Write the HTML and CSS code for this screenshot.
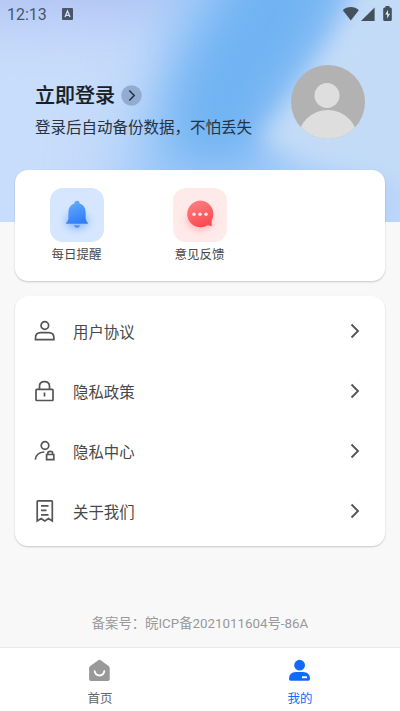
FILE: index.html
```html
<!DOCTYPE html>
<html lang="zh-CN">
<head>
<meta charset="utf-8">
<meta name="viewport" content="width=device-width, initial-scale=1">
<title>我的</title>
<link rel="stylesheet" href="styles.css">
</head>
<body>
<div class="screen">
  <header class="hero">
    <svg class="hero-bg" viewBox="0 0 400 222" preserveAspectRatio="none" aria-hidden="true">
      <defs>
        <filter id="soft" filterUnits="userSpaceOnUse" x="-150" y="-150" width="700" height="520" color-interpolation-filters="sRGB"><feGaussianBlur stdDeviation="32"/></filter>
        <filter id="edge" filterUnits="userSpaceOnUse" x="-150" y="-150" width="700" height="520" color-interpolation-filters="sRGB"><feGaussianBlur stdDeviation="24"/></filter>
        <filter id="rim" filterUnits="userSpaceOnUse" x="-150" y="-150" width="700" height="520" color-interpolation-filters="sRGB"><feGaussianBlur stdDeviation="11"/></filter>
      </defs>
      <rect width="400" height="222" fill="#c8dcfb"/>
      <ellipse cx="60" cy="-30" rx="190" ry="45" fill="#a9bcf3" opacity=".9" filter="url(#soft)"/>
      <path d="M185-60H370L310 70 262 115 290 160 400 185 370 260H170L110 175 155 90Z" fill="#9dc9f8" filter="url(#soft)"/>
      <path d="M245-50H365L325 40 280 105 250 165 165 160 175 75Z" fill="#6bb0f2" opacity=".88" filter="url(#edge)"/>
      <path d="M378-40H450V185L330 165 260 141 303 88 342 30Z" fill="#c3dbf7" filter="url(#rim)"/>
    </svg>
    <div class="status">
      <span class="clock">12:13</span>
      <svg class="badge" width="11" height="12" viewBox="0 0 11 12"><rect width="11" height="12" rx="1" fill="#48566b"/><path d="M3 9 5.500 3 8 9M4 7.300H7" fill="none" stroke="#d5e1f7" stroke-width="1.300"/></svg>
      <svg class="signals" width="52" height="16" viewBox="0 0 52 16" fill="#43515f">
        <path d="M.8 4.200C5-.2 12.600-.2 16.800 4.200L8.800 14.600Z"/>
        <path d="M19 15 32.600 1.500V15Z"/>
        <path d="M43.500 1.500V0H47.500V1.500H48.500Q49.800 1.500 49.800 3V13.500Q49.800 15 48.500 15H42.500Q41.200 15 41.200 13.500V3Q41.200 1.500 42.500 1.500Z"/>
        <path d="M46 3.800 43.200 8.500H45.200V12.700L48 7.700H46Z" fill="#dbe7f5"/>
      </svg>
    </div>
    <div class="profile">
      <div class="login">
        <div class="login-row"><h1>立即登录</h1>
          <svg width="21" height="21" viewBox="0 0 21 21"><circle cx="10.500" cy="10.500" r="10.300" fill="#91acd0"/><path d="M8.300 5.500 13.200 10.500 8.300 15.500" fill="none" stroke="#26313e" stroke-width="1.500"/></svg>
        </div>
        <p>登录后自动备份数据，不怕丢失</p>
      </div>
      <svg class="avatar" width="74" height="74" viewBox="0 0 74 74">
        <defs><clipPath id="round"><circle cx="37" cy="37" r="37"/></clipPath></defs>
        <g clip-path="url(#round)"><rect width="74" height="74" fill="#b2b2b2"/><circle cx="36" cy="30.500" r="12.500" fill="#dedede"/><circle cx="36.800" cy="75" r="30" fill="#dedede"/></g>
      </svg>
    </div>
  </header>

  <main>
    <section class="card tools">
      <a class="tool">
        <svg width="54" height="54" viewBox="0 0 54 54">
          <defs><linearGradient id="blue" x2=".4" y2="1"><stop stop-color="#6bb2fc"/><stop offset="1" stop-color="#337ff8"/></linearGradient><filter id="glow" x="-50%" y="-50%" width="200%" height="200%"><feGaussianBlur stdDeviation="3.500"/></filter></defs>
          <rect width="54" height="54" rx="13" fill="#d6e6fe"/>
          <ellipse cx="27" cy="33" rx="12" ry="9" fill="#82b5fd" opacity=".75" filter="url(#glow)"/>
          <path d="M24.400 15.500Q24.400 12.800 27 12.800T29.600 15.500Q35.600 17.500 35.600 24V30.500Q36 33 37.800 34.700V35.700H16.200V34.700Q18 33 18.400 30.500V24Q18.400 17.500 24.400 15.500Z" fill="url(#blue)"/>
          <path d="M24 37.200H30Q29.500 39.800 27 39.800T24 37.200Z" fill="#4990f8"/>
        </svg>
        <span>每日提醒</span>
      </a>
      <a class="tool">
        <svg width="54" height="54" viewBox="0 0 54 54">
          <defs><linearGradient id="red" x2=".4" y2="1"><stop stop-color="#ff8585"/><stop offset="1" stop-color="#fa4c55"/></linearGradient></defs>
          <rect width="54" height="54" rx="13" fill="#ffeaea"/>
          <ellipse cx="27" cy="32" rx="13" ry="10" fill="#ffa4a4" opacity=".75" filter="url(#glow)"/>
          <path d="M27 12.500A13.400 13.400 0 0 1 38.700 32.400V37.300Q38.700 38.300 37.700 38.100L34.800 37.200A13.400 13.400 0 1 1 27 12.500Z" fill="url(#red)"/>
          <g fill="#ffecec"><circle cx="21" cy="26.200" r="1.700"/><circle cx="27" cy="26.200" r="1.700"/><circle cx="33" cy="26.200" r="1.700"/></g>
        </svg>
        <span>意见反馈</span>
      </a>
    </section>

    <nav class="card menu">
      <a class="item"><svg class="icon" viewBox="0 0 22 24"><circle cx="10.800" cy="6.500" r="3.800"/><path d="M1.500 20.700V19Q1.500 13.700 6.700 13.700H14.700Q19.900 13.700 19.900 19V20.700Z"/></svg><span>用户协议</span><svg class="chevron" viewBox="0 0 10 16"><path d="M1.500 1.500 8 8 1.500 14.500"/></svg></a>
      <a class="item"><svg class="icon" viewBox="0 0 22 24"><rect x="2" y="10.300" width="17" height="11.200" rx=".8"/><path d="M5.500 10.300V7.300Q5.500 2.600 10.500 2.600T15.500 7.300V10.300M10.500 13.500V17.500"/></svg><span>隐私政策</span><svg class="chevron" viewBox="0 0 10 16"><path d="M1.500 1.500 8 8 1.500 14.500"/></svg></a>
      <a class="item"><svg class="icon" viewBox="0 0 22 24"><circle cx="11" cy="6.500" r="3.800"/><path d="M1.300 20.700Q2 13.500 10.300 13M12.600 15.500H19.800V20.700H12.600ZM13.800 15.300V14Q13.800 12.300 16.200 12.300T18.600 14V15.300"/></svg><span>隐私中心</span><svg class="chevron" viewBox="0 0 10 16"><path d="M1.500 1.500 8 8 1.500 14.500"/></svg></a>
      <a class="item"><svg class="icon" viewBox="0 0 22 24"><path d="M4 1.800H17.500Q18.300 1.800 18.300 2.600V22L14.500 19.600 10.800 22 7.100 19.600 3.200 22V2.600Q3.200 1.800 4 1.800ZM7 6.800H14.500M7 11.300H12.500M7 15.800H14.500"/></svg><span>关于我们</span><svg class="chevron" viewBox="0 0 10 16"><path d="M1.500 1.500 8 8 1.500 14.500"/></svg></a>
    </nav>
  </main>

  <p class="record">备案号：皖ICP备2021011604号-86A</p>

  <footer class="tabs">
    <a class="tab"><svg width="22" height="24" viewBox="0 0 22 24"><path d="M9.300 1.200Q10.500.4 11.700 1.200L19.600 6.900Q20.700 7.700 20.700 9.200V20.200Q20.700 22 18.900 22H1.900Q.1 22 .1 20.200V9.200Q.1 7.700 1.200 6.900Z" fill="#999"/><path d="M5.700 12.200Q6.300 16.500 10.500 16.500T15.300 12.200" fill="none" stroke="#fff" stroke-width="1.900" stroke-linecap="round"/></svg><span>首页</span></a>
    <a class="tab active"><svg width="22" height="24" viewBox="0 0 22 24"><circle cx="10.600" cy="6.200" r="5.400" fill="#126bf8"/><path d="M0 20Q0 13 7 13H14Q21 13 21 20Q21 21.700 19.300 21.700H1.700Q0 21.700 0 20Z" fill="#126bf8"/><rect x="13" y="17.300" width="5" height="1.900" fill="#fff"/></svg><span>我的</span></a>
  </footer>
</div>
</body>
</html>
```
FILE: styles.css
```css
* { box-sizing: border-box; }
body {
  margin: 0;
  background: #f8f8f8;
  font-family: Roboto, "Noto Sans CJK SC", sans-serif;
  color: #484848;
}
h1, p { margin: 0; }
svg { display: block; flex: none; }
.screen {
  width: 400px;
  height: 711px;
  display: flex;
  flex-direction: column;
  overflow: hidden;
}
.hero {
  position: relative;
  height: 222px;
  flex: none;
  overflow: hidden;
}
.hero-bg {
  position: absolute;
  inset: 0;
  width: 100%;
  height: 100%;
}
.status {
  position: relative;
  height: 28px;
  display: flex;
  align-items: center;
  padding: 0 6px 0 7px;
}
.clock {
  width: 41px;
  font-size: 16px;
  color: #48566b;
}
.badge { margin-left: 14px; }
.signals { margin: -1px 0 0 auto; }
.profile {
  position: relative;
  display: flex;
  justify-content: space-between;
  padding: 37px 35px 0 35px;
}
.login { padding-top: 15px; }
.login-row {
  display: flex;
  align-items: center;
  gap: 6px;
  height: 30px;
}
h1 {
  margin-top: 2px;
  font-size: 20px;
  line-height: 30px;
  font-weight: 500;
  color: #171e26;
  -webkit-text-stroke: .2px currentColor;
}
.login p {
  margin-top: 6px;
  font-size: 15.5px;
  line-height: 24px;
  color: #26323f;
}
main {
  position: relative;
  display: flex;
  flex-direction: column;
  gap: 15px;
  margin: -52px 15px 0;
}
.card {
  background: #fff;
  border-radius: 13px;
  box-shadow: 0 1px 2px rgba(0, 0, 0, .2);
}
.tools {
  height: 111px;
  display: grid;
  grid-template-columns: repeat(3, 123px);
  padding-top: 18px;
}
.tool {
  display: flex;
  flex-direction: column;
  align-items: center;
  font-size: 12.5px;
  line-height: 18px;
}
.tool span { margin-top: 4px; }
.menu {
  height: 250px;
  padding: 5px 25px 5px 19px;
}
.item {
  height: 60px;
  display: flex;
  align-items: center;
  font-size: 15.4px;
}
.item span { flex: 1; margin-left: 17px; }
.icon, .chevron {
  fill: none;
  stroke: #555;
  stroke-width: 1.7;
}
.icon { width: 22px; height: 24px; }
.chevron { width: 10px; height: 16px; stroke-width: 1.9; }
.record {
  margin-top: auto;
  padding-bottom: 13px;
  text-align: center;
  font-size: 13.35px;
  line-height: 20px;
  color: #999;
}
.tabs {
  flex: none;
  height: 64px;
  display: flex;
  background: #fff;
  border-top: 1px solid #e8e8e8;
}
.tab {
  flex: 1;
  display: flex;
  flex-direction: column;
  align-items: center;
  padding-top: 11px;
  font-size: 12.5px;
  line-height: 18px;
  color: #666;
}
.tab span { margin-top: 7px; }
.tab.active { color: #126bf8; }
```
